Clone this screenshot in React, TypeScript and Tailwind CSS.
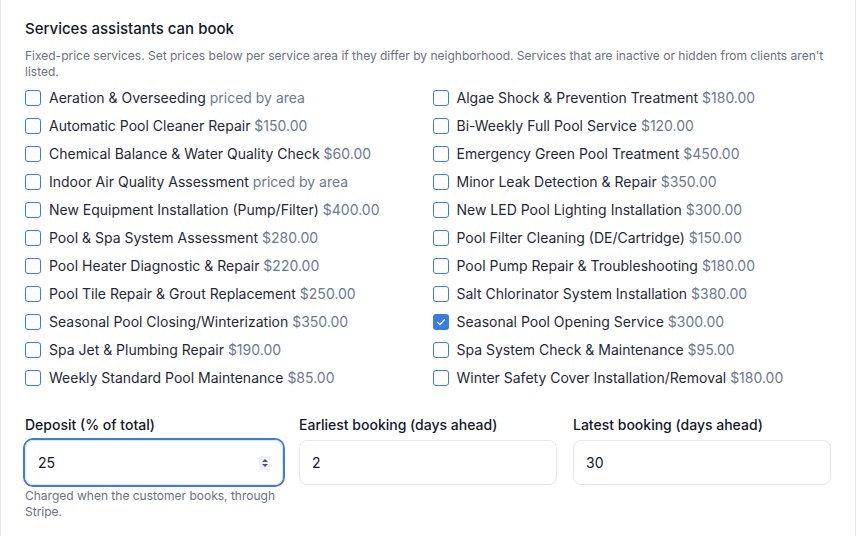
import React from 'react';

type Service = { name: string; price: string | null; checked?: boolean };

// Two columns, read top to bottom per column
const LEFT: Service[] = [
  { name: 'Aeration & Overseeding', price: null },
  { name: 'Automatic Pool Cleaner Repair', price: '$150.00' },
  { name: 'Chemical Balance & Water Quality Check', price: '$60.00' },
  { name: 'Indoor Air Quality Assessment', price: null },
  { name: 'New Equipment Installation (Pump/Filter)', price: '$400.00' },
  { name: 'Pool & Spa System Assessment', price: '$280.00' },
  { name: 'Pool Heater Diagnostic & Repair', price: '$220.00' },
  { name: 'Pool Tile Repair & Grout Replacement', price: '$250.00' },
  { name: 'Seasonal Pool Closing/Winterization', price: '$350.00' },
  { name: 'Spa Jet & Plumbing Repair', price: '$190.00' },
  { name: 'Weekly Standard Pool Maintenance', price: '$85.00' },
];

const RIGHT: Service[] = [
  { name: 'Algae Shock & Prevention Treatment', price: '$180.00' },
  { name: 'Bi-Weekly Full Pool Service', price: '$120.00' },
  { name: 'Emergency Green Pool Treatment', price: '$450.00' },
  { name: 'Minor Leak Detection & Repair', price: '$350.00' },
  { name: 'New LED Pool Lighting Installation', price: '$300.00' },
  { name: 'Pool Filter Cleaning (DE/Cartridge)', price: '$150.00' },
  { name: 'Pool Pump Repair & Troubleshooting', price: '$180.00' },
  { name: 'Salt Chlorinator System Installation', price: '$380.00' },
  { name: 'Seasonal Pool Opening Service', price: '$300.00', checked: true },
  { name: 'Spa System Check & Maintenance', price: '$95.00' },
  { name: 'Winter Safety Cover Installation/Removal', price: '$180.00' },
];

const Checkbox = ({ checked }: { checked?: boolean }) =>
  checked ? (
    <span className="flex h-4 w-4 shrink-0 items-center justify-center rounded-[3px] bg-[#3b7ddd]">
      <svg viewBox="0 0 16 16" className="h-3 w-3" fill="none" stroke="white" strokeWidth="1.8" strokeLinecap="round" strokeLinejoin="round">
        <path d="M3.5 8.5l3 3 6-6.5" />
      </svg>
    </span>
  ) : (
    <span className="h-4 w-4 shrink-0 rounded-[3px] border-[1.5px] border-[#3b7ddd] bg-white" />
  );

const ServiceRow = ({ s }: { s: Service }) => (
  <label className="flex h-5 items-center gap-2 text-sm text-[#1f2937]">
    <Checkbox checked={s.checked} />
    <span className="whitespace-nowrap">
      {s.name}{' '}
      <span className="text-[#6b7a90]">{s.price ?? 'priced by area'}</span>
    </span>
  </label>
);

export default function App() {
  return (
    <div className="min-h-[536px] bg-white font-['Inter','Liberation_Sans',sans-serif]">
      <div className="min-h-[536px] border-x border-[#e5e7eb] px-6 pt-[18px]">
        <h3 className="text-[15px] font-medium leading-[22px] text-[#111827]">Services assistants can book</h3>
        <p className="mt-2 text-xs leading-4 text-[#6b7280]">
          Fixed-price services. Set prices below per service area if they differ by neighborhood. Services that are inactive or hidden from clients aren't listed.
        </p>

        <div className="mt-2 grid grid-cols-2 gap-x-[9px]">
          <div className="flex flex-col gap-2">
            {LEFT.map((s) => (
              <ServiceRow key={s.name} s={s} />
            ))}
          </div>
          <div className="flex flex-col gap-2">
            {RIGHT.map((s) => (
              <ServiceRow key={s.name} s={s} />
            ))}
          </div>
        </div>

        <div className="mt-[27px] grid grid-cols-3 gap-4">
          <div>
            <div className="text-sm font-medium leading-5 text-[#111827]">Deposit (% of total)</div>
            <div className="mt-[5px] flex h-[45px] items-center rounded-lg border border-[#e5e7eb] px-3 ring-2 ring-[#3b7ddd]">
              <span className="flex-1 text-sm text-[#111827]">25</span>
              <span className="flex h-[14px] w-[11px] flex-col items-center justify-center gap-[2px] bg-[#eef0f2]">
                <svg viewBox="0 0 6 3" className="h-[3px] w-[6px]"><path d="M0 3L3 0L6 3Z" fill="#4b5563" /></svg>
                <svg viewBox="0 0 6 3" className="h-[3px] w-[6px]"><path d="M0 0L3 3L6 0Z" fill="#4b5563" /></svg>
              </span>
            </div>
            <p className="mt-[3px] text-xs leading-4 text-[#6b7280]">Charged when the customer books, through Stripe.</p>
          </div>
          <div>
            <div className="text-sm font-medium leading-5 text-[#111827]">Earliest booking (days ahead)</div>
            <div className="mt-[5px] flex h-[45px] items-center rounded-lg border border-[#e5e7eb] px-3 text-sm text-[#111827]">2</div>
          </div>
          <div>
            <div className="text-sm font-medium leading-5 text-[#111827]">Latest booking (days ahead)</div>
            <div className="mt-[5px] flex h-[45px] items-center rounded-lg border border-[#e5e7eb] px-3 text-sm text-[#111827]">30</div>
          </div>
        </div>
      </div>
    </div>
  );
}
